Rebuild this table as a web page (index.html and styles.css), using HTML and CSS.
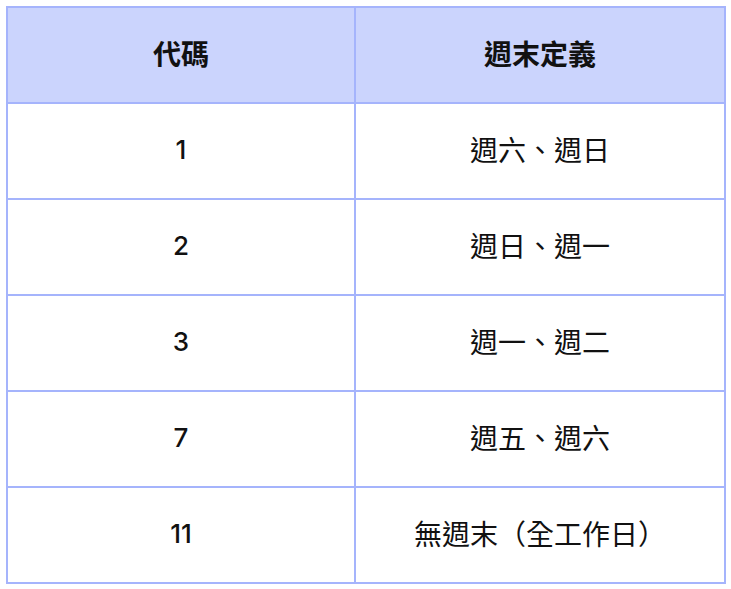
FILE: index.html
```html
<!DOCTYPE html>
<html lang="zh-Hant">
<head>
<meta charset="utf-8">
<link rel="stylesheet" href="styles.css">
</head>
<body>
<table class="codes">
  <thead>
    <tr><th class="col-code">代碼</th><th class="def">週末定義</th></tr>
  </thead>
  <tbody>
    <tr><td class="num">1</td><td class="def">週六、週日</td></tr>
    <tr><td class="num">2</td><td class="def">週日、週一</td></tr>
    <tr><td class="num">3</td><td class="def">週一、週二</td></tr>
    <tr><td class="num">7</td><td class="def">週五、週六</td></tr>
    <tr><td class="num">11</td><td class="def">無週末（全工作日）</td></tr>
  </tbody>
</table>
</body>
</html>
```
FILE: styles.css
```css
html, body { margin: 0; padding: 0; background: #ffffff; }
body { padding: 6px 6px 0 6px; }
.codes {
  width: 720px;
  border-collapse: collapse;
  font-family: Inter, "Noto Sans CJK TC", sans-serif;
  font-size: 28px;
  color: #111;
}
.codes th, .codes td {
  border: 2px solid #a5b4fc;
  height: 90px;
  padding: 0 0 4px 0;
  text-align: center;
  vertical-align: middle;
}
.codes th {
  background: #cbd4fd;
  font-weight: 700;
  font-size: 28px;
}
.codes td.num {
  font-size: 26px;
  font-weight: 500;
}
.codes .def { font-size: 28px; }
.codes td.def { font-weight: 400; }
.col-code { width: 346px; }
```
